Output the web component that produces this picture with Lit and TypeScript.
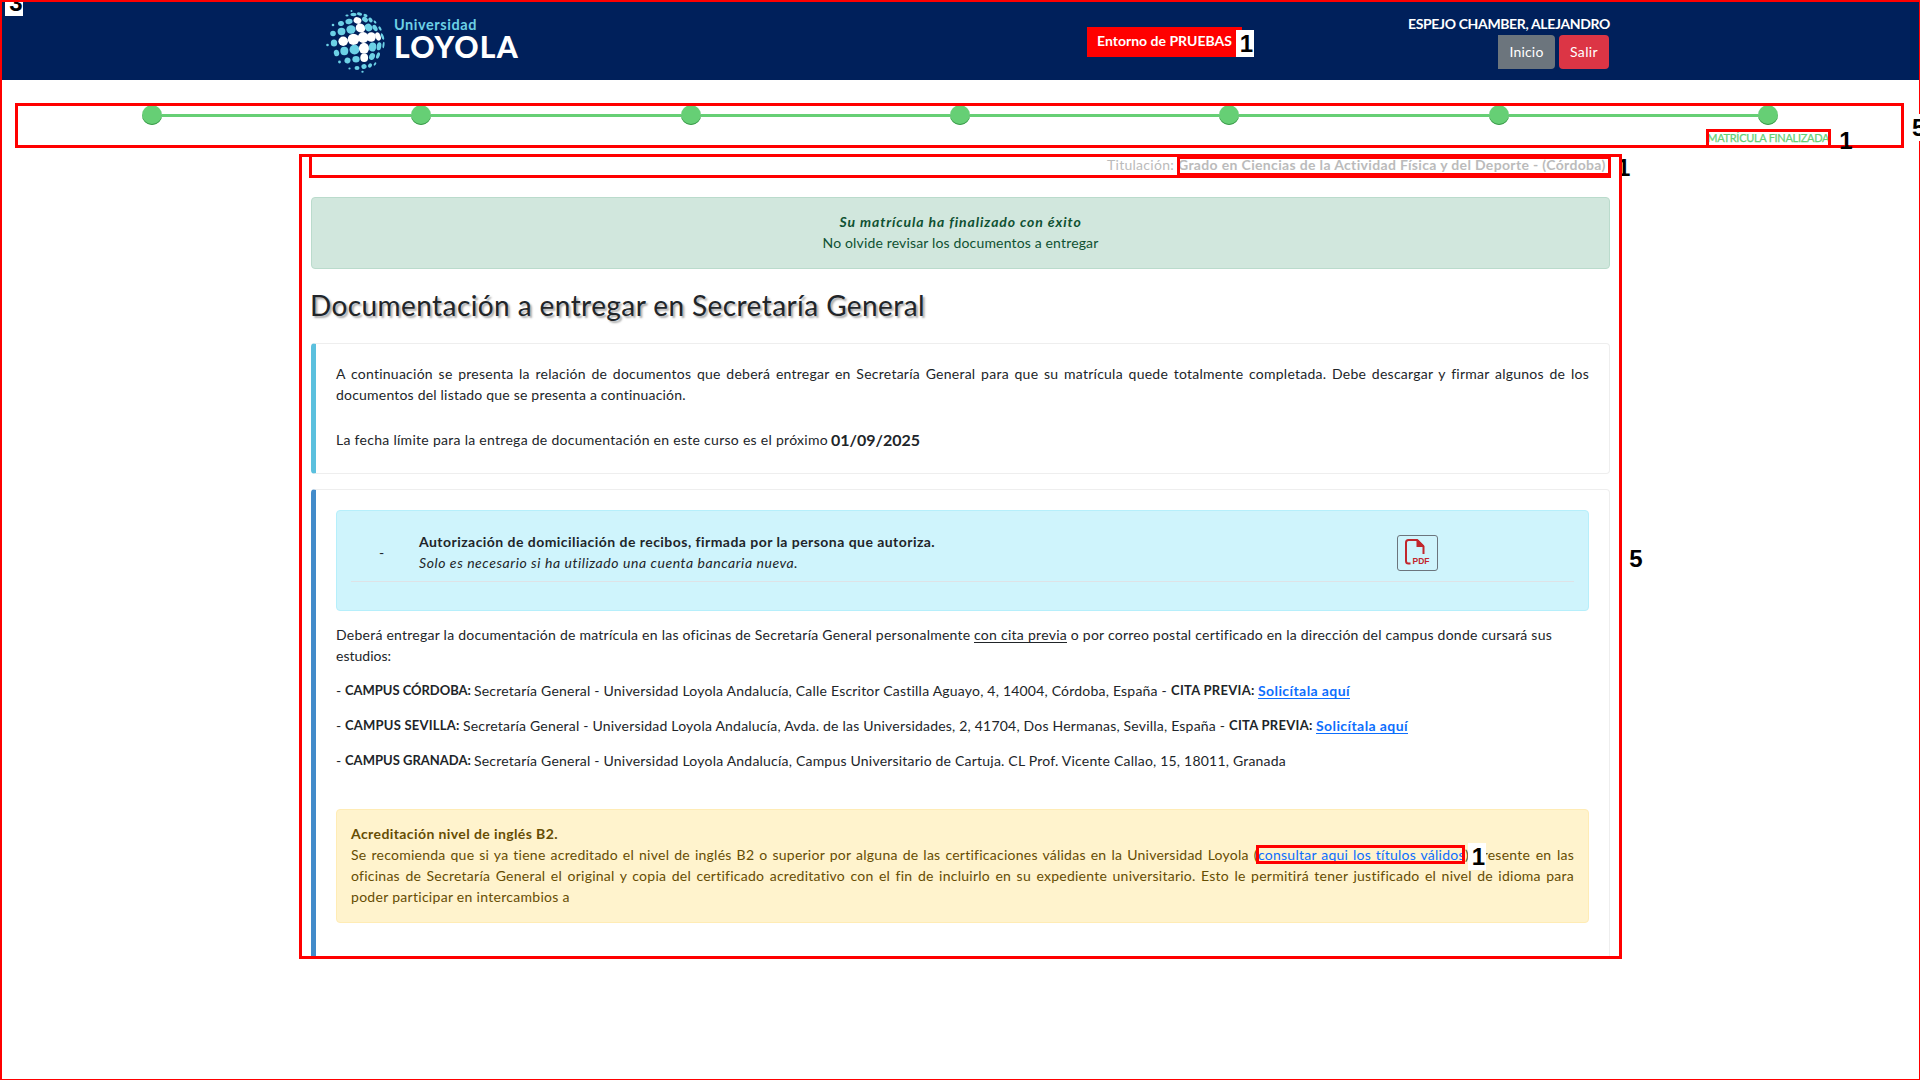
import { LitElement, html, svg, css } from "lit";
import { customElement, property } from "lit/decorators.js";

/**
 * One run of text that fills a given width. By default the letter spacing takes up
 * the difference; a justified run keeps a fixed letter spacing and stretches its spaces.
 */
@customElement("fit-text")
class FitText extends LitElement {
  @property({ type: Number }) w = 0;
  static styles = css`
    :host { display: inline-block; white-space: pre; vertical-align: baseline; text-align: left; flex: none; }
    .run { display: inline-block; white-space: pre; }
    :host(.u) .run { text-decoration: underline; text-underline-offset: 2px; }
  `;
  render() {
    return html`<span class="run"><slot></slot></span>`;
  }
  async firstUpdated() {
    await document.fonts.ready;
    const run = this.renderRoot.querySelector(".run") as HTMLElement;
    const text = this.textContent || "";
    const n = text.length;
    const spaces = text.split(" ").length - 1;
    const natural = run.getBoundingClientRect().width;
    this.style.width = this.w + "px";
    if (this.classList.contains("j") && spaces > 0) {
      const ls = 0.25;
      this.style.letterSpacing = ls + "px";
      this.style.wordSpacing = (this.w - natural - ls * n) / spaces + "px";
    } else if (n > 1) this.style.letterSpacing = (this.w - natural) / n + "px";
  }
}

const f = (w: number, text: string, cls = "") => html`<fit-text class=${cls} .w=${w}>${text}</fit-text>`;

/* Logo dots: x, y, rx, ry, tilt, white */
const DOTS: number[][] = [
  [51.5, 11, 1, 1, 0, 0], [47, 15.5, 1.6, 1.1, 0, 0], [53.5, 14.5, 3, 1.7, 0, 0], [59.5, 14, 2.6, 1.6, 10, 0], [65.5, 15.5, 2.2, 1.5, 35, 0],
  [33, 25, 1.3, 1.3, 0, 0], [41, 23.5, 3, 2.5, -15, 0], [49, 21.5, 3.6, 2.7, -10, 0], [57.5, 20.5, 4, 3.2, 20, 1], [65, 19.5, 3.2, 2.4, 40, 0], [70.5, 20, 2.6, 1.8, 50, 0], [75, 22, 1.8, 1, 50, 0],
  [33, 33.5, 2.8, 2.8, 0, 0], [41.5, 31.5, 3.9, 3.7, 0, 0], [51, 29.5, 4.6, 4.2, 0, 0], [60.5, 28, 4.9, 4.4, 30, 1], [68.5, 27.5, 4, 3.6, 55, 0], [75, 28, 3.4, 2.2, 60, 0], [80, 28.5, 2.4, 1.2, 60, 0],
  [27.5, 45, 1.3, 1.3, 0, 0], [34, 43, 3.2, 3.5, 0, 0], [43.2, 41.3, 4.8, 4.7, 0, 1], [53.5, 39.3, 5.8, 5.6, 0, 1], [63.2, 37.5, 5.4, 5.4, 0, 1], [71.3, 37, 4.5, 4.8, 0, 1], [78, 36.5, 4.3, 2.6, 70, 1], [82.5, 36.5, 3.4, 1.2, 70, 0],
  [36.5, 53, 2.7, 3.2, -10, 0], [44.3, 51, 4, 4.2, 0, 0], [54.5, 49.6, 5, 4.9, 0, 0], [64, 48.3, 5.1, 5.5, 0, 1], [72.5, 47, 3.7, 4.5, 10, 0], [79, 46.3, 2.3, 4, 10, 0], [83.5, 45, 1, 3.2, 8, 0],
  [39.5, 62, 1.4, 1.4, 0, 0], [47.5, 60.5, 3, 3, 20, 0], [56, 59.3, 3.6, 3.3, 0, 0], [64.2, 57.8, 3.9, 4.2, 0, 1], [72, 56.5, 2.8, 3.6, 25, 0], [78, 55.5, 1.7, 3.3, 20, 0],
  [49.5, 68.5, 1.1, 1.1, 0, 0], [57, 68, 2.5, 2.1, 0, 0], [64, 66.5, 2.6, 2.5, -20, 0], [70, 65.5, 1.8, 2.4, 40, 0], [75, 64, 1, 1.8, 35, 0], [62.5, 71.8, 1.2, 1, 0, 0],
];

@customElement("app-root")
class AppRoot extends LitElement {
  static styles = css`
    :host { display: block; position: relative; width: 1920px; height: 1080px; overflow: hidden; background: #fff; color: #212529;
      font: 14px/21px "Trebuchet MS", Lato, "Open Sans", sans-serif; }
    * { box-sizing: border-box; }
    b, .b { font-weight: 700; }
    .i { font-style: italic; }
    .c { font-size: 13px; }
    .row { display: flex; white-space: pre; height: 21px; }
    header { height: 80px; background: #00205b; display: flex; padding-left: 325px; }
    .logo { display: flex; width: 762px; }
    .logo svg { width: 63px; height: 80px; flex: none; }
    .brand { padding: 15px 0 0 6px; color: #6cd1e6; display: flex; flex-direction: column; align-items: flex-start; }
    .uni { font: 700 14.5px/20px Lato, sans-serif; }
    .loy { font: 900 30px/30px Lato, sans-serif; color: #fff; margin-top: -4px; }
    .env { width: 155px; height: 30px; margin-top: 27px; background: #f00; color: #fff; padding: 3px 10px; }
    .user { width: 368px; padding-top: 13px; display: flex; flex-direction: column; align-items: flex-end; color: #fff; }
    .btns { display: flex; gap: 4px; margin: 1px 1px 0 0; }
    .btn { height: 34px; border-radius: 4px; display: flex; justify-content: center; padding-top: 6px; }
    .home { width: 57px; background: #6c757d; border-radius: 0 4px 4px 0; }
    .exit { width: 50px; background: #dc3545; }
    .steps { display: grid; grid-template-columns: repeat(7, 1fr); margin: 25px 17px 0; height: 49px; }
    .step { display: flex; flex-direction: column; align-items: center; }
    .track { display: flex; align-items: center; width: 100%; height: 20px; }
    .track i { flex: 1; height: 3px; margin-top: 1px; background: #66cf75; }
    .step:first-child i:first-child, .step:last-child i:last-child { background: none; }
    .dot { width: 20px; height: 20px; border-radius: 50%; background: #66cf75; box-shadow: inset 0 -1px 0 #3d9a4c; }
    .lbl { font-size: 11px; line-height: 16px; color: #66cf75; padding-top: 5px; white-space: nowrap; height: 21px; -webkit-text-stroke: 0.25px #66cf75; }
    main { width: 1299px; margin-left: 311px; height: 802px; overflow: hidden; }
    .deg { color: #bbb; justify-content: flex-end; padding-right: 4px; height: 24px; gap: 4px; }
    .ok { margin-top: 19px; height: 72px; border: 1px solid #badbcc; border-radius: 4px; background: #d1e7dd; color: #0f5132; padding-top: 13px; }
    .ok .row { justify-content: center; }
    h2 { margin: 18px 0 0 -1px; font-weight: 400; font-size: 28px; line-height: 36px; height: 56px; text-shadow: 2px 2px 2px #aaa; }
    .card { border: 1px solid #eee; border-left: 5px solid #5bc0de; border-radius: 4px; padding: 20px 20px 0; }
    .one { height: 131px; padding-top: 19px; }
    .one .gap { margin-top: 24px; }
    .big { font-size: 16px; margin-left: 3px; }
    .two { margin-top: 15px; height: 500px; border-left-color: #428bca; }
    .info { height: 101px; border: 1px solid #b6effb; border-radius: 4px; background: #cff4fc; padding: 15px 14px; }
    .doc { display: grid; grid-template-columns: 68px 978px 1fr; height: 56px; border-bottom: 1px solid #dee2e6; padding-top: 5px; }
    .dash { padding: 11px 0 0 28px; }
    .pdf { width: 41px; height: 36px; margin-top: 4px; border: 1px solid #6c757d; border-radius: 3px; }
    .pdf svg { display: block; width: 39px; height: 34px; }
    .pdf text { font: 700 9.5px "Liberation Sans", Arial, sans-serif; }
    .intro { padding-top: 13px; height: 55px; }
    .campus { margin-top: 14px; }
    .warn { margin-top: 38px; height: 114px; border: 1px solid #ffecb5; border-radius: 4px; background: #fff3cd; color: #664d03; padding: 13px 14px; }
    a { color: #0d6efd; }
    .mark { position: absolute; border: 3px solid #f00; }
    .tag { position: absolute; font: 700 24px/27px "Liberation Sans", Arial, sans-serif; color: #000; height: 27px; width: 18px; text-align: center; overflow: hidden; }
    .w { background: #fff; }
    .edge { left: 0; top: 0; width: 1920px; height: 1080px; border-width: 2px 1px 1px 2px; }
    .m1 { left: 15px; top: 103px; width: 1889px; height: 45px; }
    .m2 { left: 1706px; top: 129px; width: 125px; height: 19px; }
    .m3 { left: 299px; top: 154px; width: 1323px; height: 805px; }
    .m4 { left: 309px; top: 154px; width: 1302px; height: 24px; }
    .m5 { left: 1177px; top: 156px; width: 434px; height: 20px; }
    .m6 { left: 1256px; top: 845px; width: 209px; height: 19px; }
    .t0 { left: 5px; top: 2px; height: 14px; line-height: 2px; text-indent: 4px; }
    .t1 { left: 1236px; top: 30px; text-indent: 3px; }
    .t2 { left: 1837px; top: 127px; }
    .t3 { left: 1912px; top: 114px; width: 8px; text-align: left; }
    .t4 { left: 1622px; top: 154px; width: 10px; text-indent: -5px; text-align: left; }
    .t5 { left: 1627px; top: 545px; }
    .t6 { left: 1468px; top: 843px; text-indent: 3px; }
  `;

  render() {
    return html`
      <header>
        <div class="logo">
          <svg viewBox="25 0 63 80">${DOTS.map(([x, y, rx, ry, r, w]) => svg`<ellipse cx=${x} cy=${y} rx=${rx} ry=${ry} transform="rotate(${r} ${x} ${y})" fill=${w ? "#fff" : "#6cd1e6"}></ellipse>`)}</svg>
          <div class="brand">${f(83, "Universidad", "uni")}${f(125, "LOYOLA", "loy")}</div>
        </div>
        <div class="env">${f(135, "Entorno de PRUEBAS", "b")}</div>
        <div class="user">
          ${f(202, "ESPEJO CHAMBER, ALEJANDRO", "b")}
          <div class="btns">
            <div class="btn home">${f(34, "Inicio")}</div>
            <div class="btn exit">${f(28, "Salir")}</div>
          </div>
        </div>
      </header>
      <div class="steps">
        ${[0, 1, 2, 3, 4, 5, 6].map((n) => html`<div class="step">
          <div class="track"><i></i><span class="dot"></span><i></i></div>
          ${n === 6 ? html`<div class="lbl">${f(122, "MATRÍCULA FINALIZADA")}</div>` : ""}
        </div>`)}
      </div>
      <main>
        <div class="row deg">${f(67, "Titulación:")}${f(428, "Grado en Ciencias de la Actividad Física y del Deporte - (Córdoba)", "b")}</div>
        <div class="ok">
          <div class="row">${f(242, "Su matrícula ha finalizado con éxito", "b i")}</div>
          <div class="row">${f(276, "No olvide revisar los documentos a entregar")}</div>
        </div>
        <h2>${f(615, "Documentación a entregar en Secretaría General")}</h2>
        <section class="card one">
          <div class="row">${f(1253, "A continuación se presenta la relación de documentos que deberá entregar en Secretaría General para que su matrícula quede totalmente completada. Debe descargar y firmar algunos de los", "j")}</div>
          <div class="row">${f(350, "documentos del listado que se presenta a continuación.")}</div>
          <div class="row gap">${f(492, "La fecha límite para la entrega de documentación en este curso es el próximo")}${f(89, "01/09/2025", "b big")}</div>
        </section>
        <section class="card two">
          <div class="info">
            <div class="doc">
              <div class="dash">-</div>
              <div>
                <div class="row">${f(516, "Autorización de domiciliación de recibos, firmada por la persona que autoriza.", "b")}</div>
                <div class="row">${f(379, "Solo es necesario si ha utilizado una cuenta bancaria nueva.", "i")}</div>
              </div>
              <div class="pdf"><svg viewBox="0 0 39 34" fill="none" stroke="#c1272d">
                <path d="M12.5 27.500H10.500Q8 27.500 8 25V6.500Q8 4 10.500 4H19L25.500 10.500V18" stroke-width="2"></path>
                <path d="M18.500 3.500V11H26V9.500L20 3.500Z" fill="#c1272d" stroke="none"></path>
                <text x="14.500" y="28.300" textLength="17" lengthAdjust="spacingAndGlyphs" fill="#c1272d" stroke="none">PDF</text>
              </svg></div>
            </div>
          </div>
          <div class="intro">
            <div class="row">${f(638, "Deberá entregar la documentación de matrícula en las oficinas de Secretaría General personalmente ")}${f(93, "con cita previa", "u")}${f(485, " o por correo postal certificado en la dirección del campus donde cursará sus")}</div>
            <div class="row">${f(55, "estudios:")}</div>
          </div>
          <div class="row campus">${f(9, "- ")}${f(129, "CAMPUS CÓRDOBA: ", "b c")}${f(697, "Secretaría General - Universidad Loyola Andalucía, Calle Escritor Castilla Aguayo, 4, 14004, Córdoba, España - ")}${f(87, "CITA PREVIA: ", "b c")}<a>${f(92, "Solicítala aquí", "u b")}</a></div>
          <div class="row campus">${f(9, "- ")}${f(118, "CAMPUS SEVILLA: ", "b c")}${f(766, "Secretaría General - Universidad Loyola Andalucía, Avda. de las Universidades, 2, 41704, Dos Hermanas, Sevilla, España - ")}${f(87, "CITA PREVIA: ", "b c")}<a>${f(92, "Solicítala aquí", "u b")}</a></div>
          <div class="row campus">${f(9, "- ")}${f(129, "CAMPUS GRANADA: ", "b c")}${f(812, "Secretaría General - Universidad Loyola Andalucía, Campus Universitario de Cartuja. CL Prof. Vicente Callao, 15, 18011, Granada")}</div>
          <div class="warn">
            <div class="row">${f(207, "Acreditación nivel de inglés B2.", "b")}</div>
            <div class="row">${f(907, "Se recomienda que si ya tiene acreditado el nivel de inglés B2 o superior por alguna de las certificaciones válidas en la Universidad Loyola (", "j")}<a>${f(207, "consultar aqui los títulos válidos", "j")}</a>${f(109, ") presente en las", "j")}</div>
            <div class="row">${f(1223, "oficinas de Secretaría General el original y copia del certificado acreditativo con el fin de incluirlo en su expediente universitario. Esto le permitirá tener justificado el nivel de idioma para", "j")}</div>
            <div class="row">${f(219, "poder participar en intercambios a")}</div>
          </div>
        </section>
      </main>
      <div class="mark edge"></div>
      <div class="mark m1"></div><div class="mark m2"></div><div class="mark m3"></div>
      <div class="mark m4"></div><div class="mark m5"></div><div class="mark m6"></div>
      <div class="tag w t0">3</div><div class="tag w t1">1</div><div class="tag t2">1</div>
      <div class="tag w t3">5</div><div class="tag t4">1</div><div class="tag t5">5</div><div class="tag w t6">1</div>
    `;
  }
}
